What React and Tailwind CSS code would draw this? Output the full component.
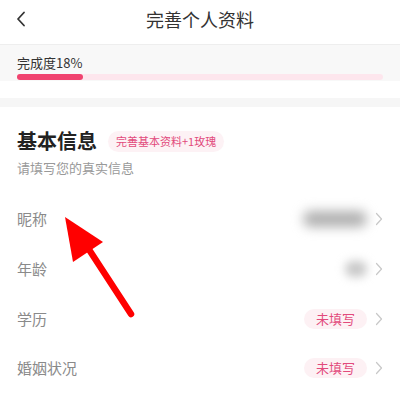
import React from "react";

const font = { fontFamily: '"Noto Sans CJK SC", "Noto Sans", sans-serif' };

function Chevron() {
  return (
    <svg width="8" height="14" viewBox="0 0 8 14" className="ml-[8px]">
      <path d="M1.5 1.5 L6.5 7 L1.5 12.5" fill="none" stroke="#c8c8c8" strokeWidth="1.2" strokeLinecap="round" strokeLinejoin="round" />
    </svg>
  );
}

function Row({ label, children, h = "h-[50px]" }) {
  return (
    <div className={`flex ${h} items-center justify-between pl-[17px] pr-[17px]`}>
      <span className="text-[15px] leading-[20px] text-[#8a8a8a]">{label}</span>
      <div className="flex items-center">
        {children}
        <Chevron />
      </div>
    </div>
  );
}

function Empty() {
  return (
    <span className="flex h-[20px] items-center rounded-full bg-[#fdf1f4] px-[12px] text-[13px] leading-[20px] text-[#e24a7c]">
      未填写
    </span>
  );
}

export default function App() {
  return (
    <div className="relative h-[396px] w-[400px] overflow-hidden bg-white" style={font}>
      {/* header */}
      <div className="relative flex h-[45px] justify-center border-b border-[#eeeeee] pt-[7px]">
        <svg width="10" height="16" viewBox="0 0 10 16" className="absolute left-[16px] top-[11px]">
          <path d="M8 1.5 L2 8 L8 14.5" fill="none" stroke="#333" strokeWidth="1.8" strokeLinecap="round" strokeLinejoin="round" />
        </svg>
        <span className="text-[18px] leading-[24px] text-[#333]">完善个人资料</span>
      </div>
      {/* progress */}
      <div className="bg-[#f8f8f8] px-[17px] pt-[9px] pb-[1px]">
        <div className="text-[13px] leading-[18px] text-[#333]">完成度18%</div>
        <div className="mt-[2px] h-[6px] w-full rounded-full bg-[#fde6ed]">
          <div className="h-[6px] w-[66px] rounded-full bg-[#f0436f]" />
        </div>
      </div>
      <div className="h-[17px] bg-white" />
      <div className="h-[9px] bg-[#f6f6f6]" />
      {/* card */}
      <div className="px-0 pt-[20px]">
        <div className="flex items-center pl-[17px]">
          <span className="text-[20px] font-bold leading-[28px] text-[#222]">基本信息</span>
          <span className="ml-[11px] rounded-full bg-[#fdf2f5] px-[8px] text-[11px] leading-[21px] text-[#e24a7c]">
            完善基本资料+1玫瑰
          </span>
        </div>
        <div className="mt-[4px] pl-[17px] text-[13px] leading-[18px] text-[#999]">请填写您的真实信息</div>
        <div className="mt-[17px]">
          <Row label="昵称">
            <div className="h-[16px] w-[64px] rounded-full bg-[#b0b0b0] blur-[6px]" />
          </Row>
          <Row label="年龄">
            <div className="h-[16px] w-[22px] rounded-full bg-[#c8c8c8] blur-[5px]" />
          </Row>
          <Row label="学历">
            <Empty />
          </Row>
          <Row label="婚姻状况" h="h-[48px]">
            <Empty />
          </Row>
        </div>
      </div>
      {/* red arrow annotation */}
      <svg className="pointer-events-none absolute left-0 top-0" width="400" height="396" viewBox="0 0 400 396">
        <line x1="88" y1="248" x2="131" y2="314" stroke="#ff0000" strokeWidth="6.5" strokeLinecap="round" />
        <polygon points="65,217 103,242 73,262" fill="#ff0000" />
      </svg>
    </div>
  );
}
